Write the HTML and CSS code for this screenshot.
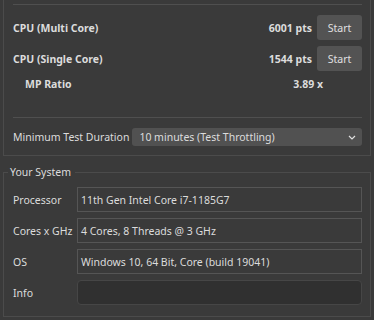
FILE: index.html
```html
<!DOCTYPE html>
<html lang="en">
<head>
    <meta charset="UTF-8">
    <title>Cinebench</title>
    <link rel="stylesheet" href="styles.css">
</head>
<body>
    <div class="panel">
        <div class="sep"></div>
        <div class="test-row">
            <span class="test-name">CPU (Multi Core)</span>
            <span class="score">6001 pts</span>
            <button class="start">Start</button>
        </div>
        <div class="test-row">
            <span class="test-name">CPU (Single Core)</span>
            <span class="score">1544 pts</span>
            <button class="start">Start</button>
        </div>
        <div class="ratio-row">
            <span class="test-name">MP Ratio</span>
            <span class="ratio">3.89 x</span>
        </div>
        <div class="sep sep-low"></div>
        <div class="duration-row">
            <span class="duration-label">Minimum Test Duration</span>
            <div class="select">
                <span>10 minutes (Test Throttling)</span>
                <svg width="8" height="5" viewBox="0 0 8 5"><path d="M1 1l3 3 3-3" fill="none" stroke="#e0e0e0" stroke-width="1.2"/></svg>
            </div>
        </div>
    </div>

    <fieldset class="system">
        <legend>Your System</legend>
        <div class="info-row">
            <span class="info-label">Processor</span>
            <div class="field">11th Gen Intel Core i7-1185G7</div>
        </div>
        <div class="info-row">
            <span class="info-label">Cores x GHz</span>
            <div class="field">4 Cores, 8 Threads @ 3 GHz</div>
        </div>
        <div class="info-row">
            <span class="info-label">OS</span>
            <div class="field">Windows 10, 64 Bit, Core (build 19041)</div>
        </div>
        <div class="info-row">
            <span class="info-label">Info</span>
            <div class="field field-edit"></div>
        </div>
    </fieldset>
</body>
</html>
```

FILE: styles.css
```css
body {
    background: #3a3a3a;
    color: #dcdcdc;
    font-family: "Noto Sans", "Open Sans", sans-serif;
    font-size: 10.5px;
    margin: 0;
}
.panel {
    margin: 0 3px;
    height: 156px;
    box-sizing: border-box;
    border: 1px solid #4b4b4b;
    border-top: none;
    padding: 4px 8px 0 9px;
}
.sep {
    height: 1px;
    background: #4f4f4f;
}
.sep-low {
    margin-top: 23px;
}
.test-row {
    display: flex;
    align-items: center;
    height: 25px;
    margin-top: 10px;
}
.test-row + .test-row {
    margin-top: 6px;
}
.test-name {
    font-weight: bold;
    flex: 1;
}
.score {
    font-weight: bold;
    margin-right: 5px;
}
button.start {
    width: 45px;
    height: 25px;
    background: #535353;
    color: #e0e0e0;
    border: none;
    border-radius: 3px;
    font-family: inherit;
    font-size: 10.5px;
    padding: 0;
}
.ratio-row {
    display: flex;
    align-items: center;
    height: 20px;
    margin-top: 3px;
    padding-left: 12px;
    padding-right: 39px;
}
.ratio {
    font-weight: bold;
}
.duration-row {
    display: flex;
    align-items: center;
    margin-top: 10px;
}
.duration-label {
    white-space: nowrap;
    margin-right: 3px;
}
.select {
    flex: 1;
    height: 18px;
    background: #515151;
    border-radius: 3px;
    display: flex;
    align-items: center;
    justify-content: space-between;
    padding: 0 6px 0 7px;
}
.system {
    margin: 9px 3px 0;
    border: 1px solid #4b4b4b;
    padding: 8px 8px 9px 9px;
    height: 152px;
    box-sizing: border-box;
}
.system legend {
    padding: 0 4px 0 2px;
    margin-left: -5px;
}
.info-row {
    display: flex;
    align-items: center;
    margin-bottom: 6px;
}
.info-label {
    width: 64px;
}
.field {
    flex: 1;
    height: 25px;
    box-sizing: border-box;
    border: 1px solid #555;
    padding: 0 3px;
    display: flex;
    align-items: center;
}
.field-edit {
    background: #303030;
    border-color: #464646;
    border-radius: 4px;
}
```
